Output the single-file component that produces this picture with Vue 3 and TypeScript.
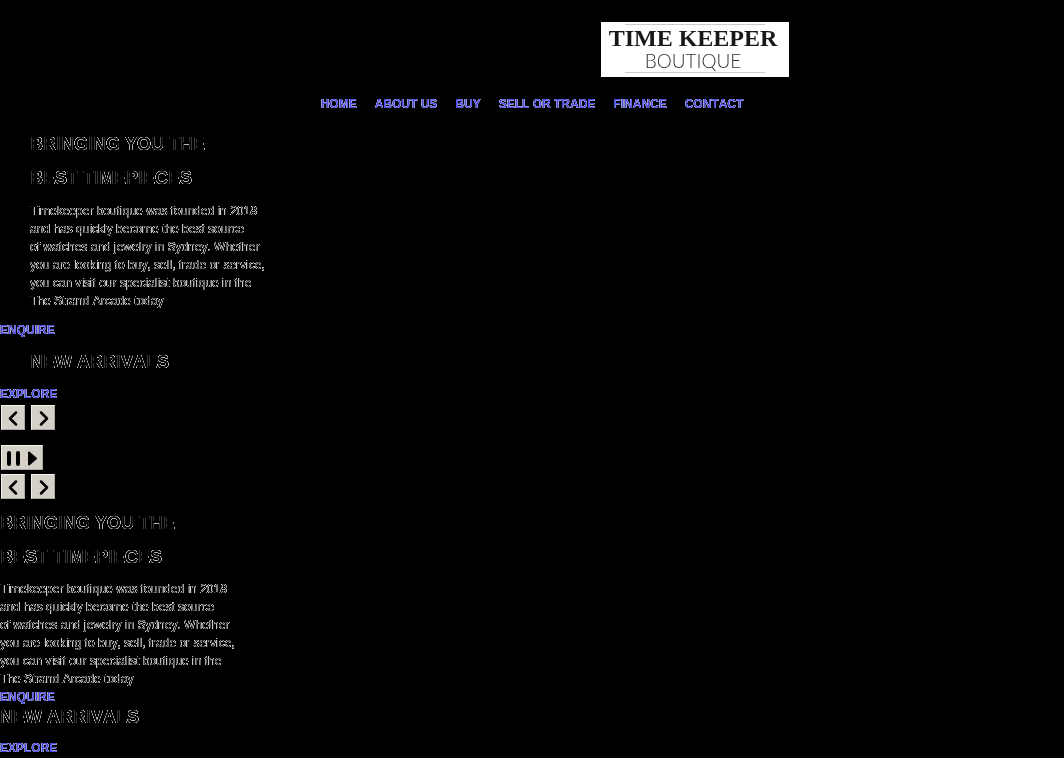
<script setup lang="ts">
interface Slide {
  id: string
  title: string[]
  body: string[]
  action: string
}

const links: string[] = ['HOME', 'ABOUT US', 'BUY', 'SELL OR TRADE', 'FINANCE', 'CONTACT']

const slides: Slide[] = [
  {
    id: 'intro',
    title: ['BRINGING YOU THE', 'BEST TIMEPIECES'],
    body: [
      'Timekeeper boutique was founded in 2018',
      'and has quickly become the best source',
      'of watches and jewelry in Sydney. Whether',
      'you are looking to buy, sell, trade or service,',
      'you can visit our specialist boutique in the',
      'The Strand Arcade today',
    ],
    action: 'ENQUIRE',
  },
  { id: 'arrivals', title: ['NEW ARRIVALS'], body: [], action: 'EXPLORE' },
]
</script>

<template>
  <div class="page">
    <header>
      <a class="logo" href="#" aria-label="Time Keeper Boutique">
        <span class="logo-name">TIME KEEPER</span>
        <span class="logo-sub">BOUTIQUE</span>
      </a>
      <nav>
        <a v-for="link in links" :key="link" href="#">{{ link }}</a>
      </nav>
    </header>
    <main>
      <section class="desktop">
        <article v-for="slide in slides" :key="slide.id" :class="slide.id">
          <h2><span v-for="line in slide.title" :key="line">{{ line }}</span></h2>
          <p v-if="slide.body.length"><span v-for="line in slide.body" :key="line">{{ line }}</span></p>
          <a href="#">{{ slide.action }}</a>
        </article>
      </section>
      <div class="controls">
        <button type="button" aria-label="Previous slide"><svg viewBox="0 0 22 23"><path d="M14 6.500l-6 6 6 6" /></svg></button>
        <button type="button" aria-label="Next slide"><svg viewBox="0 0 22 23"><path d="M9 6.500l6 6-6 6" /></svg></button>
      </div>
      <div class="controls playback">
        <button type="button" class="wide" aria-label="Pause or play slideshow">
          <svg viewBox="0 0 40 23">
            <rect x="5" y="5" width="4" height="15" rx="2" class="solid" />
            <rect x="14" y="5" width="4" height="15" rx="2" class="solid" />
            <path d="M27 6.500v12l7-6z" class="solid joined" />
          </svg>
        </button>
      </div>
      <div class="controls">
        <button type="button" aria-label="Previous slide"><svg viewBox="0 0 22 23"><path d="M14 6.500l-6 6 6 6" /></svg></button>
        <button type="button" aria-label="Next slide"><svg viewBox="0 0 22 23"><path d="M9 6.500l6 6-6 6" /></svg></button>
      </div>
      <section class="mobile">
        <article v-for="slide in slides" :key="slide.id" :class="slide.id">
          <h2><span v-for="line in slide.title" :key="line">{{ line }}</span></h2>
          <p v-if="slide.body.length"><span v-for="line in slide.body" :key="line">{{ line }}</span></p>
          <a href="#">{{ slide.action }}</a>
        </article>
      </section>
    </main>
  </div>
</template>

<style>
body {
  background: #000;
}
</style>

<style scoped>
.page {
  min-height: 100vh;
  overflow: hidden;
  color: #000;
  font: 12px/18px "Liberation Sans", Arial, sans-serif;
  font-kerning: none;
  text-rendering: optimizeSpeed;
  text-shadow: 0 0 0 #fff, 0 0 0 #fff, 0 0 0 #fff, 0 0 0 #fff, 0 0 0 #fff, 0 0 0 #fff,
    0 0 0 #fff, 0 0 0 #fff, 0 0 0 #fff, 0 0 0 #fff, 0 0 0 #fff, 0 0 0 #fff;
  will-change: transform;
}
header {
  padding-top: 22px;
}
.logo {
  display: flex;
  flex-direction: column;
  align-items: center;
  box-sizing: border-box;
  width: 188px;
  height: 55px;
  margin-left: calc(50% + 69px);
  padding: 3px 4px 0 0;
  background: linear-gradient(#ccc, #ccc) 50% 2px / 140px 1px no-repeat,
    linear-gradient(#ccc, #ccc) 50% 50px / 140px 1px no-repeat, #fff;
  color: #181818;
  text-decoration: none;
  text-shadow: none;
  white-space: nowrap;
}
.logo-name {
  font: bold 24px/27px "Liberation Serif", serif;
}
.logo-sub {
  color: #333;
  font: 300 19px/17px Lato, sans-serif;
}
nav {
  display: flex;
  justify-content: center;
  gap: 18px;
  padding-top: 18px;
}
nav a,
article a {
  color: #4a4ae0;
  font-weight: 700;
  text-decoration: none;
  text-shadow: 0 0 0 #fff, 0 0 0 #fff, 0 0 0 #fff;
}
.desktop {
  padding-top: 14px;
}
h2 {
  margin: 0;
  font-size: 18px;
  font-weight: 700;
  line-height: 34px;
}
h2 span,
p span,
article > a {
  display: block;
}
article > a {
  width: max-content;
}
p {
  margin: 0;
  padding-top: 7px;
}
.desktop h2,
.desktop p {
  margin-left: 30px;
}
.desktop p {
  padding-bottom: 11px;
}
.desktop .arrivals {
  padding-top: 6px;
}
.desktop .arrivals a {
  margin-top: 6px;
}
.controls {
  display: flex;
  gap: 6px;
  margin: 2px 0 3px 1px;
}
.playback {
  margin-top: 15px;
  margin-bottom: 4px;
}
button {
  box-sizing: border-box;
  width: 24px;
  height: 25px;
  padding: 0;
  border: 1px solid;
  border-color: #f4f3ef #aaa8a2 #aaa8a2 #f4f3ef;
  background: #d4d0c8;
}
.wide {
  width: 42px;
}
svg {
  display: block;
  width: 100%;
  height: 100%;
  fill: none;
  stroke: #000;
  stroke-width: 2.5;
  stroke-linecap: round;
  stroke-linejoin: round;
}
.solid {
  fill: #000;
  stroke: none;
}
.joined {
  stroke: #000;
  stroke-width: 2;
}
.mobile {
  padding-top: 4px;
}
.mobile p {
  padding-top: 6px;
}
.mobile .arrivals h2 {
  line-height: 22px;
  padding-bottom: 11px;
}
</style>
